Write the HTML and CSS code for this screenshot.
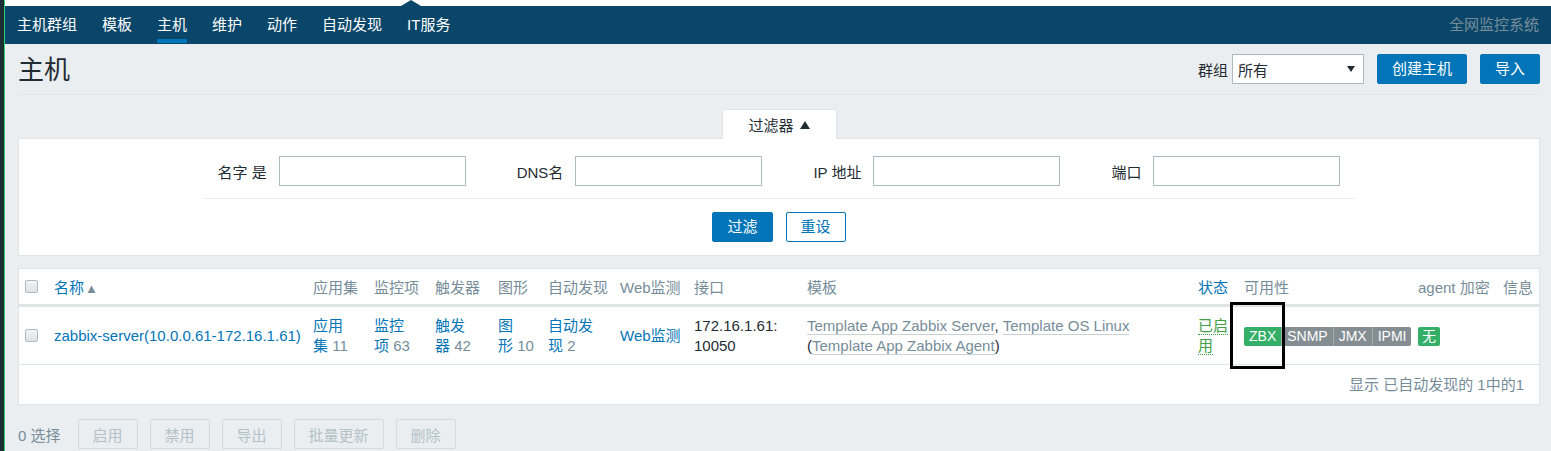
FILE: index.html
```html
<!DOCTYPE html>
<html lang="zh-CN">
<head>
<meta charset="utf-8">
<title>主机</title>
<link rel="stylesheet" href="styles.css">
</head>
<body>
<div class="desk"></div>
<div class="edge"></div>
<div class="page">
  <div class="topband"><span class="caret"></span></div>
  <nav class="topnav">
    <ul class="menu">
      <li><a>主机群组</a></li>
      <li><a>模板</a></li>
      <li><a class="active">主机</a></li>
      <li><a>维护</a></li>
      <li><a>动作</a></li>
      <li><a>自动发现</a></li>
      <li><a>IT服务</a></li>
    </ul>
    <div class="brand">全网监控系统</div>
  </nav>
  <main class="content">
    <header class="header">
      <h1>主机</h1>
      <div class="controls">
        <label class="ctl-label">群组</label>
        <div class="select"><span>所有</span><i class="arrow"></i></div>
        <button class="btn">创建主机</button>
        <button class="btn">导入</button>
      </div>
    </header>

    <div class="filter-tab">过滤器 <i class="up"></i></div>
    <section class="filter">
      <div class="fields">
        <div class="field"><label>名字 是</label><span class="input"></span></div>
        <div class="field"><label>DNS名</label><span class="input"></span></div>
        <div class="field"><label>IP 地址</label><span class="input"></span></div>
        <div class="field"><label>端口</label><span class="input"></span></div>
      </div>
      <div class="sep"></div>
      <div class="filter-actions">
        <button class="btn">过滤</button>
        <button class="btn btn-alt">重设</button>
      </div>
    </section>

    <section class="list">
      <table>
        <colgroup>
          <col class="c-cb"><col class="c-name"><col class="c-app"><col class="c-item"><col class="c-trig">
          <col class="c-graph"><col class="c-disc"><col class="c-web"><col class="c-if"><col class="c-tpl">
          <col class="c-status"><col class="c-avail"><col class="c-enc"><col class="c-info">
        </colgroup>
        <thead>
          <tr>
            <th class="cb-cell"><span class="checkbox"></span></th>
            <th><span class="sort">名称</span><span class="sort-arrow">▲</span></th>
            <th>应用集</th>
            <th>监控项</th>
            <th>触发器</th>
            <th>图形</th>
            <th>自动发现</th>
            <th>Web监测</th>
            <th>接口</th>
            <th>模板</th>
            <th><span class="sort">状态</span></th>
            <th>可用性</th>
            <th>agent 加密</th>
            <th>信息</th>
          </tr>
        </thead>
        <tbody>
          <tr>
            <td class="cb-cell"><span class="checkbox"></span></td>
            <td><a class="link">zabbix-server(10.0.0.61-172.16.1.61)</a></td>
            <td><a class="link">应用<br>集</a> <span class="count">11</span></td>
            <td><a class="link">监控<br>项</a> <span class="count">63</span></td>
            <td><a class="link">触发<br>器</a> <span class="count">42</span></td>
            <td><a class="link">图<br>形</a> <span class="count">10</span></td>
            <td><a class="link">自动发<br>现</a> <span class="count">2</span></td>
            <td><a class="link">Web监测</a></td>
            <td class="plain">172.16.1.61:<br>10050</td>
            <td class="plain"><a class="tpl">Template App Zabbix Server</a>, <a class="tpl">Template OS Linux</a><br>(<a class="tpl">Template App Zabbix Agent</a>)</td>
            <td><a class="enabled">已启<br>用</a></td>
            <td>
              <span class="badges">
                <span class="badge green">ZBX</span><span class="badge grey">SNMP</span><span class="badge grey">JMX</span><span class="badge grey">IPMI</span>
              </span>
            </td>
            <td><span class="badge green solo">无</span></td>
            <td></td>
          </tr>
        </tbody>
      </table>
      <div class="paging">显示 已自动发现的 1中的1</div>
    </section>

    <div class="actions">
      <span class="selected">0 选择</span>
      <button class="btn-off">启用</button>
      <button class="btn-off">禁用</button>
      <button class="btn-off">导出</button>
      <button class="btn-off">批量更新</button>
      <button class="btn-off">删除</button>
    </div>
  </main>
</div>
<div class="mark"></div>
</body>
</html>
```

FILE: styles.css
```css
* { box-sizing: border-box; }

html, body {
  margin: 0;
  padding: 0;
}

body {
  display: flex;
  height: 451px;
  overflow: hidden;
  background: #ebeef0;
  font-family: "Liberation Sans", Arial, "Noto Sans CJK SC", sans-serif;
  font-size: 15px;
  color: #1f2c33;
  position: relative;
}

.desk {
  width: 4px;
  flex: none;
  background: #1b2e33;
}

.edge {
  width: 1px;
  flex: none;
  background: #35d074;
}

.page {
  flex: 1;
  min-width: 0;
  display: flex;
  flex-direction: column;
}

.topband {
  height: 6px;
  background: #ffffff;
  position: relative;
}

.caret {
  position: absolute;
  left: 396px;
  top: 0;
  width: 0;
  height: 0;
  border-left: 10px solid transparent;
  border-right: 10px solid transparent;
  border-bottom: 6px solid #0a466a;
}

.topnav {
  height: 38px;
  background: #0a466a;
  display: flex;
  justify-content: space-between;
  align-items: stretch;
  padding: 0 12px;
}

.menu {
  list-style: none;
  margin: 0;
  padding: 0;
  display: flex;
  gap: 25px;
}

.menu a {
  display: block;
  line-height: 38px;
  color: #ffffff;
  font-size: 15px;
}

.menu a.active {
  background: linear-gradient(#0275b8, #0275b8) no-repeat left 33px / 100% 4px;
}

.brand {
  line-height: 38px;
  color: #768d99;
  font-size: 15px;
}

.content {
  padding: 0 11px 0 13px;
}

.header {
  height: 51px;
  border-bottom: 1px solid #dfe4e7;
  display: flex;
  align-items: center;
  justify-content: space-between;
}

.header h1 {
  margin: 0;
  font-size: 26px;
  font-weight: normal;
  color: #1f2c33;
  line-height: 30px;
  padding-top: 2px;
}

.controls {
  display: flex;
  align-items: center;
}

.ctl-label {
  margin-right: 4px;
}

.select {
  width: 132px;
  height: 30px;
  border: 1px solid #acbbc2;
  background: #ffffff;
  display: flex;
  align-items: center;
  justify-content: space-between;
  padding: 0 8px 0 5px;
  margin-right: 13px;
}

.arrow {
  width: 0;
  height: 0;
  border-left: 4px solid transparent;
  border-right: 4px solid transparent;
  border-top: 6px solid #1f2c33;
}

.btn {
  height: 30px;
  padding: 0 14px;
  background: #0275b8;
  border: 1px solid #0275b8;
  border-radius: 2px;
  color: #ffffff;
  font-family: inherit;
  font-size: 15px;
  line-height: 28px;
}

.controls .btn + .btn {
  margin-left: 13px;
}

.btn-alt {
  background: #ffffff;
  color: #0275b8;
}

.filter-tab {
  width: 115px;
  height: 30px;
  margin: 14px auto -1px;
  background: #ffffff;
  border: 1px solid #dfe4e7;
  border-bottom: none;
  border-radius: 2px 2px 0 0;
  position: relative;
  z-index: 1;
  display: flex;
  align-items: center;
  justify-content: center;
  gap: 6px;
}

.up {
  width: 0;
  height: 0;
  border-left: 5px solid transparent;
  border-right: 5px solid transparent;
  border-bottom: 8px solid #1f2c33;
}

.filter {
  background: #ffffff;
  border: 1px solid #dfe4e7;
  padding: 17px 0 13px;
}

.fields {
  display: flex;
  justify-content: center;
  gap: 51px;
}

.field {
  display: flex;
  align-items: center;
  gap: 12px;
}

.input {
  display: block;
  width: 187px;
  height: 30px;
  border: 1px solid #acbbc2;
  background: #ffffff;
}

.sep {
  width: 1151px;
  height: 1px;
  background: #e8ecee;
  margin: 12px auto 13px;
}

.filter-actions {
  display: flex;
  justify-content: center;
  gap: 13px;
}

.list {
  margin-top: 12px;
  background: #ffffff;
  border: 1px solid #dfe4e7;
}

table {
  width: 100%;
  table-layout: fixed;
  border-collapse: separate;
  border-spacing: 0;
}

.c-cb { width: 30px; }
.c-name { width: 259px; }
.c-app { width: 61px; }
.c-item { width: 61px; }
.c-trig { width: 63px; }
.c-graph { width: 50px; }
.c-disc { width: 72px; }
.c-web { width: 74px; }
.c-if { width: 113px; }
.c-tpl { width: 391px; }
.c-status { width: 46px; }
.c-avail { width: 174px; }
.c-enc { width: 85px; }
.c-info { width: 41px; }

th {
  height: 38px;
  padding: 0 5px;
  text-align: left;
  font-weight: normal;
  color: #768d99;
  white-space: nowrap;
  border-bottom: 3px solid #dfe4e7;
  vertical-align: middle;
}

td {
  height: 58px;
  padding: 0 5px;
  line-height: 20px;
  border-bottom: 1px solid #dfe4e7;
  vertical-align: middle;
  white-space: nowrap;
}

.cb-cell {
  padding-left: 6px;
}

.checkbox {
  display: block;
  width: 13px;
  height: 13px;
  border: 1px solid #acbbc2;
  border-radius: 2px;
  background: linear-gradient(#f2f4f5, #dde2e5);
}

.sort {
  color: #0275b8;
}

.sort-arrow {
  color: #768d99;
  font-size: 13px;
  margin-left: 1px;
}

.link {
  color: #0275b8;
}

.count {
  color: #768d99;
}

.plain {
  color: #1f2c33;
}

.tpl {
  color: #768d99;
  border-bottom: 1px solid #c8d1d6;
}

.enabled {
  color: #429e47;
  border-bottom: 1px dotted #429e47;
}

.badges {
  display: inline-flex;
  border-radius: 2px;
  overflow: hidden;
  vertical-align: middle;
}

.badge {
  display: inline-block;
  height: 19px;
  line-height: 19px;
  padding: 0 5px;
  font-size: 14px;
  color: #ffffff;
}

.badge + .badge {
  border-left: 1px solid rgba(255, 255, 255, 0.25);
}

.green {
  background: #34af67;
}

.grey {
  background: #848d92;
}

.solo {
  padding: 0 4px;
  border-radius: 2px;
  vertical-align: middle;
}

.paging {
  height: 39px;
  line-height: 39px;
  text-align: right;
  padding-right: 15px;
  color: #768d99;
}

.actions {
  margin-top: 14px;
  display: flex;
  align-items: center;
  gap: 12px;
}

.selected {
  color: #768d99;
  margin-right: 5px;
}

.btn-off {
  height: 30px;
  padding: 0 14px;
  background: transparent;
  border: 1px solid #d3dadd;
  border-radius: 2px;
  color: #b4c1c7;
  font-family: inherit;
  font-size: 15px;
}

.mark {
  position: absolute;
  left: 1230px;
  top: 302px;
  width: 55px;
  height: 67px;
  border: 3px solid #000000;
}
```
